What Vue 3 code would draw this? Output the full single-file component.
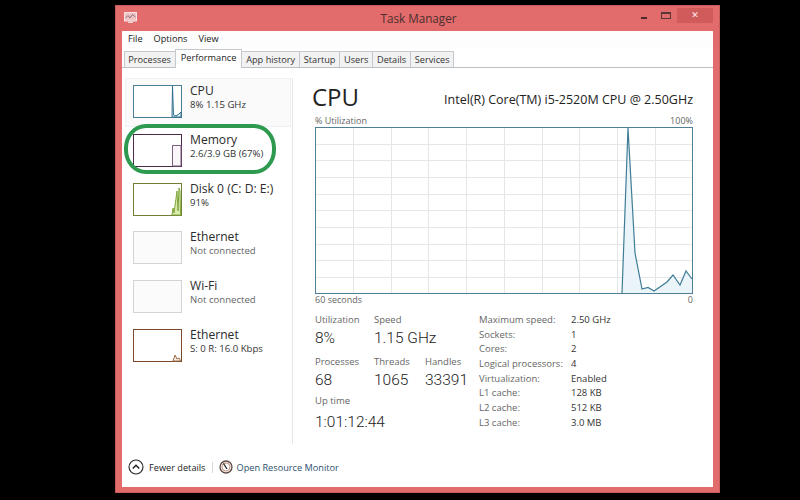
<template>
  <div class="page">
    <div class="window">
      <header class="titlebar">
        <svg class="app-icon" width="13" height="12" viewBox="0 0 13 12">
          <rect x="0.5" y="0.5" width="12" height="8.5" fill="#f1c4c4" stroke="#f7e3e3" />
          <path d="M1.5 6 L4 3.5 L6 6 L8.5 2.5 L11.5 5" fill="none" stroke="#8a6f7c" stroke-width="1" />
          <rect x="4" y="9.5" width="5" height="1.5" fill="#f3d5d5" />
        </svg>
        <div class="title">Task Manager</div>
        <div class="controls">
          <span class="ctl-min"></span>
          <span class="ctl-max"></span>
          <span class="ctl-close">✕</span>
        </div>
      </header>
      <div class="client">
        <nav class="menu">
          <span v-for="m in menus" :key="m">{{ m }}</span>
        </nav>
        <div class="tabs">
          <span v-for="t in tabs" :key="t" class="tab" :class="{ active: t === 'Performance' }">{{ t }}</span>
        </div>
        <div class="body">
          <aside class="side">
            <div v-for="(d, i) in devices" :key="i" class="device" :class="{ selected: i === 0 }">
              <svg class="thumb" width="49" height="33" viewBox="0 0 49 33">
                <rect x="0.5" y="0.5" width="48" height="32" :fill="d.bg" :stroke="d.color" />
                <path v-if="d.path" :d="d.path" :fill="d.fill" :stroke="d.line" stroke-width="1" />
              </svg>
              <div class="dev-text">
                <div class="dev-name">{{ d.name }}</div>
                <div class="dev-sub" :class="{ muted: d.muted }">{{ d.sub }}</div>
              </div>
            </div>
            <div class="highlight"></div>
          </aside>
          <main class="main">
            <div class="head">
              <div class="cpu-title">CPU</div>
              <div class="cpu-model">Intel(R) Core(TM) i5-2520M CPU @ 2.50GHz</div>
            </div>
            <div class="axis top"><span>% Utilization</span><span>100%</span></div>
            <svg class="graph" width="378" height="167" viewBox="0 0 378 167">
              <rect x="0.5" y="0.5" width="377" height="166" fill="#fff" />
              <path v-for="x in vLines" :key="'v' + x" :d="`M${x + 0.5} 1V166`" stroke="#e4e7e8" stroke-width="1" />
              <path v-for="y in hLines" :key="'h' + y" :d="`M1 ${y + 0.5}H377`" stroke="#e4e7e8" stroke-width="1" />
              <path :d="graphLine + ' L377 166 L307 166 Z'" fill="#eaf4f9" stroke="none" />
              <path :d="graphLine" fill="none" stroke="#3f7d96" stroke-width="1.2" />
              <rect x="0.5" y="0.5" width="377" height="166" fill="none" stroke="#4f7f97" />
            </svg>
            <div class="axis bottom"><span>60 seconds</span><span>0</span></div>
            <div class="stats">
              <div class="live">
                <div class="row r1">
                  <div class="stat w1"><label>Utilization</label><b>8%</b></div>
                  <div class="stat"><label>Speed</label><b>1.15 GHz</b></div>
                </div>
                <div class="row r2">
                  <div class="stat w1"><label>Processes</label><b>68</b></div>
                  <div class="stat w2"><label>Threads</label><b>1065</b></div>
                  <div class="stat"><label>Handles</label><b>33391</b></div>
                </div>
                <div class="row r3">
                  <div class="stat"><label>Up time</label><b class="uptime">1:01:12:44</b></div>
                </div>
              </div>
              <dl class="specs">
                <template v-for="s in specs" :key="s[0]">
                  <dt>{{ s[0] }}</dt>
                  <dd>{{ s[1] }}</dd>
                </template>
              </dl>
            </div>
          </main>
        </div>
        <footer class="foot">
          <svg width="16" height="16" viewBox="0 0 16 16">
            <circle cx="8" cy="8" r="7" fill="#fff" stroke="#222" stroke-width="1.1" />
            <path d="M4.8 9.6 L8 6.3 L11.2 9.6" fill="none" stroke="#222" stroke-width="1.5" />
          </svg>
          <span class="fewer">Fewer details</span>
          <span class="sep"></span>
          <svg width="14" height="14" viewBox="0 0 14 14">
            <circle cx="7" cy="7" r="6" fill="#f4ece6" stroke="#5b4a48" stroke-width="1.3" />
            <circle cx="7" cy="7" r="4" fill="#fff" stroke="#b9806a" stroke-width="0.8" />
            <path d="M4.5 3.5 L8 9" stroke="#222" stroke-width="1.3" />
          </svg>
          <span class="link">Open Resource Monitor</span>
        </footer>
      </div>
    </div>
  </div>
</template>

<script setup>
const menus = ['File', 'Options', 'View']
const tabs = ['Processes', 'Performance', 'App history', 'Startup', 'Users', 'Details', 'Services']
const devices = [
  { name: 'CPU', sub: '8%  1.15 GHz', color: '#4a7d96', line: '#2f6f8c', bg: '#fff', fill: '#eaf4f9', path: 'M39 32 L39.5 1 L40.5 30 L43 31 L46 29 L48 27 V32 Z' },
  { name: 'Memory', sub: '2.6/3.9 GB (67%)', color: '#4a2b4a', line: '#7d5f7d', bg: '#fff', fill: '#fbf6fa', path: 'M39.5 32 V11.5 H48 V32 Z' },
  { name: 'Disk 0 (C: D: E:)', sub: '91%', color: '#6f7f34', line: '#7fa63a', bg: '#fff', fill: '#dcebb0', path: 'M39 32 L40 25 L41 30 L44 8 L45 28 L46 5 L47 8 L47.5 30 L48 32 Z' },
  { name: 'Ethernet', sub: 'Not connected', muted: true, color: '#d4d4d4', bg: '#fbfbfb' },
  { name: 'Wi-Fi', sub: 'Not connected', muted: true, color: '#d4d4d4', bg: '#fbfbfb' },
  { name: 'Ethernet', sub: 'S: 0 R: 16.0 Kbps', color: '#7a4a2a', line: '#9a6a48', bg: '#fff', fill: '#f8efe6', path: 'M40 32 L42 26 L44 30 L46 29 L48 32 Z' },
]
const vLines = [38, 76, 113, 151, 189, 227, 264, 302, 340]
const hLines = [17, 33, 50, 67, 83, 100, 117, 133, 150]
const graphLine = 'M307 166 L313 1 L320 126 L327 162 L333 160.500 L339 164 L352 155 L358 148 L365 158 L371 144 L377 152'
const specs = [
  ['Maximum speed:', '2.50 GHz'],
  ['Sockets:', '1'],
  ['Cores:', '2'],
  ['Logical processors:', '4'],
  ['Virtualization:', 'Enabled'],
  ['L1 cache:', '128 KB'],
  ['L2 cache:', '512 KB'],
  ['L3 cache:', '3.0 MB'],
]
</script>

<style>
html, body { margin: 0; background: #000; }
</style>

<style scoped>
.page {
  width: 800px;
  height: 500px;
  background: #000;
  padding: 5px 80px 7px 115px;
  box-sizing: border-box;
  font-family: "Open Sans", "Noto Sans", sans-serif;
  color: #333;
  overflow: hidden;
}
.window {
  height: 488px;
  background: #e26b6b;
  box-shadow: inset 0 0 0 1px #c85c5c;
  display: flex;
  flex-direction: column;
  padding: 0 7px 6px 7px;
  box-sizing: border-box;
}
.titlebar {
  height: 26px;
  flex: none;
  display: flex;
  align-items: center;
  position: relative;
}
.app-icon { margin: 0 0 0 2px; }
.title {
  position: absolute;
  left: 0;
  right: 0;
  top: 5px;
  text-align: center;
  font-size: 11.7px;
  color: #4a2f2f;
  padding-left: 2px;
}
.controls {
  margin-left: auto;
  display: flex;
  align-items: flex-start;
  height: 26px;
}
.ctl-min { width: 6px; height: 2px; background: #4a2c2c; margin: 12px 14px 0 0; }
.ctl-max { width: 8px; height: 4px; border: 1px solid #5a3636; border-top-width: 2px; margin: 7px 6px 0 0; }
.ctl-close {
  width: 36px;
  height: 15px;
  background: #cf5b5b;
  color: #fbe9e9;
  text-align: center;
  font-size: 9px;
  line-height: 15px;
  margin: 3px 0 0 0;
  font-family: "DejaVu Sans", sans-serif;
}
.client {
  flex: 1;
  background: #fff;
  display: flex;
  flex-direction: column;
  min-height: 0;
}
.menu {
  height: 18px;
  display: flex;
  gap: 11px;
  padding: 0 0 0 6px;
  font-size: 9.2px;
  line-height: 16px;
  color: #222;
  background: #fdfdfd;
  flex: none;
}
.tabs {
  height: 18px;
  display: flex;
  align-items: flex-end;
  padding-left: 2.5px;
  border-bottom: 1px solid #b9c0c6;
  flex: none;
}
.tab {
  height: 15px;
  line-height: 15px;
  padding: 0 3.8px;
  font-size: 9.2px;
  color: #333;
  background: #f2f2f2;
  border: 1px solid #c4c8cc;
  border-bottom: none;
  margin-left: -1px;
}
.tab.active {
  background: #fff;
  height: 18px;
  color: #222;
  padding: 0 5px;
  margin-bottom: -1px;
}
.body {
  flex: 1;
  display: flex;
  min-height: 0;
}
.side {
  width: 171px;
  flex: none;
  box-sizing: border-box;
  padding: 0 0 0 3px;
  margin-top: 10px;
  border-right: 1px solid #e6e6e6;
  position: relative;
}
.device {
  width: 166px;
  height: 48.8px;
  box-sizing: border-box;
  padding: 7px 0 0 8px;
  display: flex;
  gap: 8px;
}
.device.selected {
  background: #fafafa;
  border: 1px solid #eef0f2;
  padding-left: 7px;
  padding-top: 6px;
}
.thumb { flex: none; }
.dev-text { margin-top: -3px; }
.dev-name { font-size: 12.1px; line-height: 17px; color: #2b2b2b; }
.dev-sub { font-size: 9.6px; line-height: 12px; color: #333; }
.dev-sub.muted { color: #666; }
.highlight {
  position: absolute;
  left: 2px;
  top: 46px;
  width: 152px;
  height: 50px;
  box-sizing: border-box;
  border: 4px solid #2e9a50;
  border-radius: 22px / 24px;
  pointer-events: none;
}
.main {
  flex: 1;
  padding: 0 20px 0 22px;
  min-width: 0;
}
.head {
  height: 35px;
  display: flex;
  justify-content: space-between;
  align-items: flex-end;
  margin-left: -3px;
  padding-top: 10px;
}
.cpu-title { font-size: 24px; line-height: 34px; color: #222; margin-bottom: -1px; }
.cpu-model { font-size: 12.5px; line-height: 17px; color: #222; margin: 0 0 5px; }
.axis {
  display: flex;
  justify-content: space-between;
  font-size: 9px;
  color: #666;
  line-height: 12px;
}
.axis.top { height: 12px; padding-top: 2px; }
.graph { display: block; }
.stats {
  display: flex;
  margin-top: 7px;
}
.live { width: 164px; flex: none; }
.row { display: flex; }
.r1 { height: 42px; }
.r2 { height: 39px; }
.stat { display: flex; flex-direction: column; }
.w1 { width: 59px; }
.w2 { width: 51px; }
.stat label { font-size: 9.5px; line-height: 13px; color: #666; }
.stat b {
  font-family: Roboto, "Open Sans", sans-serif;
  font-weight: 300;
  font-size: 15.5px;
  line-height: 22px;
  color: #222;
  margin-top: 1px;
  white-space: nowrap;
}
.stat b.uptime { margin-top: 4px; }
.specs {
  margin: 0;
  display: grid;
  grid-template-columns: 92px auto;
  grid-auto-rows: 14.7px;
  font-size: 9.5px;
  line-height: 14px;
}
dt { color: #666; }
dd { margin: 0; color: #333; }
.foot {
  flex: none;
  height: 43px;
  display: flex;
  align-items: center;
  padding: 3px 0 0 6px;
  box-sizing: border-box;
  font-size: 9.2px;
}
.fewer { margin-left: 5px; color: #222; }
.sep { width: 1px; height: 11px; background: #d8d8d8; margin: 0 6px 0 6px; }
.link { margin-left: 4px; color: #2c4f6e; }
</style>
